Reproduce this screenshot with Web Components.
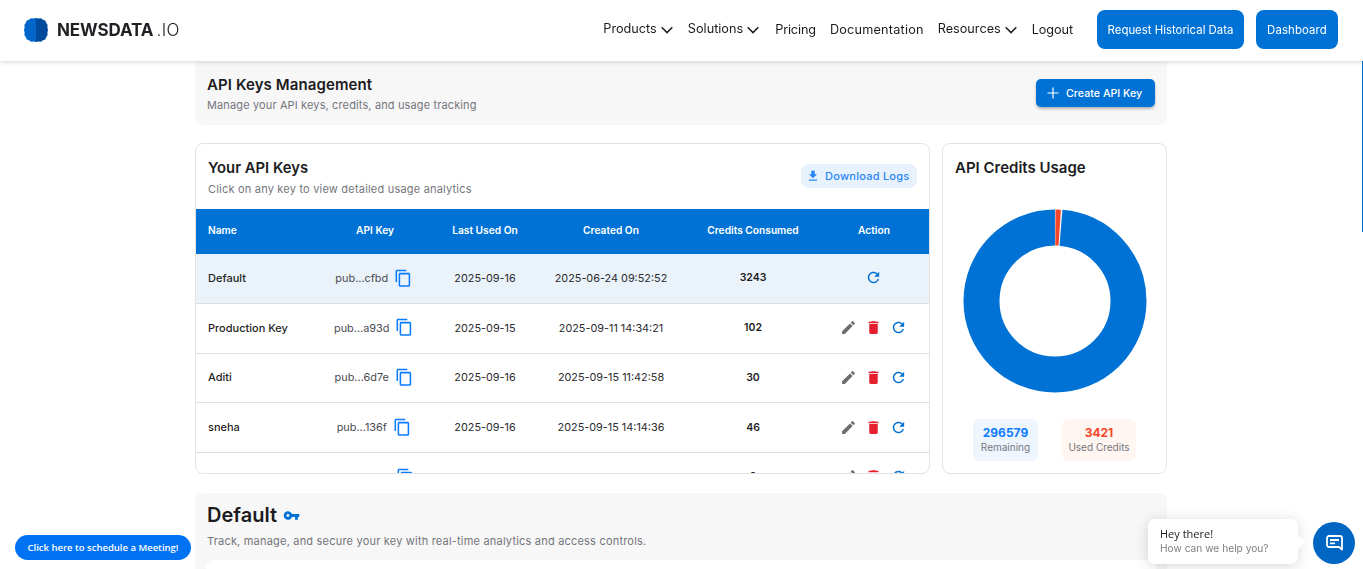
<!DOCTYPE html>
<html lang="en">
<head>
<meta charset="utf-8">
<title>API Keys</title>
<style>
  html, body { margin: 0; height: 569px; overflow: hidden; background: #fff; }
  body { font-family: Inter, "Liberation Sans", sans-serif; color: #1c1c1e; }
</style>
</head>
<body>
<site-header></site-header>
<main-page>
  <title-band heading="API Keys Management" sub="Manage your API keys, credits, and usage tracking"></title-band>
  <keys-card></keys-card>
  <credits-card></credits-card>
  <default-band></default-band>
</main-page>
<meeting-pill></meeting-pill>
<chat-widget></chat-widget>
<edge-bar></edge-bar>
<script>
const ICONS = {
  copy: 'M16 1H4c-1.1 0-2 .9-2 2v14h2V3h12V1zm3 4H8c-1.1 0-2 .9-2 2v14c0 1.1.9 2 2 2h11c1.1 0 2-.9 2-2V7c0-1.1-.9-2-2-2zm0 16H8V7h11v14z',
  edit: 'M3 17.25V21h3.75L17.81 9.94l-3.75-3.75L3 17.25zM20.71 7.04c.39-.39.39-1.02 0-1.41l-2.34-2.34c-.39-.39-1.02-.39-1.41 0l-1.83 1.83 3.75 3.75 1.83-1.83z',
  trash: 'M6 19c0 1.1.9 2 2 2h8c1.1 0 2-.9 2-2V7H6v12zM19 4h-3.5l-1-1h-5l-1 1H5v2h14V4z',
  refresh: 'M17.65 6.35C16.2 4.9 14.21 4 12 4c-4.42 0-7.99 3.58-7.99 8s3.57 8 7.99 8c3.73 0 6.84-2.55 7.73-6h-2.08c-.82 2.33-3.04 4-5.65 4-3.31 0-6-2.69-6-6s2.69-6 6-6c1.66 0 3.14.69 4.22 1.78L13 11h7V4l-2.35 2.35z',
  download: 'M19 9h-4V3H9v6H5l7 7 7-7zM5 18v2h14v-2H5z',
  key: 'M12.65 10C11.83 7.67 9.61 6 7 6c-3.31 0-6 2.69-6 6s2.69 6 6 6c2.61 0 4.83-1.67 5.65-4H17v4h4v-4h2v-4H12.65zM7 14c-1.1 0-2-.9-2-2s.9-2 2-2 2 .9 2 2-.9 2-2 2z'
};
const icon = (name, size, color) =>
  `<svg width="${size}" height="${size}" viewBox="0 0 24 24" fill="${color}" style="display:block;flex:none"><path d="${ICONS[name]}"/></svg>`;
const chevron = `<svg width="12" height="8" viewBox="0 0 12 8" fill="none" stroke="#1c1c1e" stroke-width="1.5" style="display:block;flex:none"><path d="M.7 1.300 6 6.600l5.300-5.300"/></svg>`;

class SiteHeader extends HTMLElement {
  constructor() { super(); this.attachShadow({ mode: 'open' }); }
  connectedCallback() {
    const link = (t, menu, cls = '') => `<a class="${menu ? 'menu' : ''} ${cls}">${t}${menu ? chevron : ''}</a>`;
    this.shadowRoot.innerHTML = `
      <style>
        :host { display: flex; align-items: center; height: 61px; box-sizing: border-box; padding: 0 25px 2px 24px;
          background: #fff; box-shadow: 0 1px 5px rgba(0,0,0,.16); position: relative; z-index: 3; }
        .logo { display: flex; align-items: center; gap: 9px; font-size: 17px; font-weight: 700; color: #1f2023; letter-spacing: -.1px; }
        .logo span { font-weight: 300; margin-left: 3px; letter-spacing: .4px; }
        nav { margin-left: auto; display: flex; align-items: center; gap: 15px; font-size: 12.700px; color: #1c1c1e; }
        a { display: flex; align-items: center; white-space: nowrap; }
        a.menu { margin-top: -2px; gap: 4px; }
        a.menu svg { margin-top: 3px; }
        a.sol { margin-right: 1px; }
        a.doc { letter-spacing: .2px; margin-left: -1px; margin-right: -1px; }
        a.price { letter-spacing: -.15px; }
        a.logout { letter-spacing: -.1px; }
        button { font: inherit; font-size: 11.400px; color: #fff; background: #0072d6; border: 0; border-radius: 8px; height: 39px; padding: 0; }
        .btns { display: flex; gap: 12px; margin-left: 9px; }
        .wide { width: 147px; }
        .dash { width: 82px; letter-spacing: .12px; }
      </style>
      <div class="logo">
        <svg width="24" height="24" viewBox="0 0 24 24">
          <path fill="#0066cc" d="M12 0 9.500.6 7 .3 5 1.800 2.800 2.600 1.800 4.800.4 7 .6 9.600 0 12l.6 2.400-.2 2.600 1.400 2.200 1 2.200 2.200.8L7 23.700l2.500-.3 2.500.6z"/>
          <path fill="#004a9c" d="M12 0l2.500.6L17 .3l2 1.500 2.200.8 1 2.200L23.600 7l-.2 2.600.6 2.400-.6 2.400.2 2.600-1.400 2.200-1 2.200-2.200.8-2 1.500-2.500-.3-2.500.6z"/>
        </svg>
        <div>NEWSDATA<span>.IO</span></div>
      </div>
      <nav>
        ${link('Products', 1)}${link('Solutions', 1, 'sol')}${link('Pricing', 0, 'price')}${link('Documentation', 0, 'doc')}${link('Resources', 1)}${link('Logout', 0, 'logout')}
        <div class="btns"><button class="wide">Request Historical Data</button><button class="dash">Dashboard</button></div>
      </nav>`;
  }
}

class MainPage extends HTMLElement {
  constructor() { super(); this.attachShadow({ mode: 'open' }); }
  connectedCallback() {
    this.shadowRoot.innerHTML = `
      <style>
        :host { display: grid; width: 972px; margin-left: 195px; grid-template-columns: 735px 225px;
          column-gap: 12px; grid-template-rows: 64px 331px auto; row-gap: 18px; }
        ::slotted(title-band), ::slotted(default-band) { grid-column: 1 / -1; }
        ::slotted(default-band) { margin-top: 1px; }
      </style>
      <slot></slot>`;
  }
}

class TitleBand extends HTMLElement {
  constructor() { super(); this.attachShadow({ mode: 'open' }); }
  connectedCallback() {
    this.shadowRoot.innerHTML = `
      <style>
        :host { display: flex; align-items: center; justify-content: space-between; box-sizing: border-box; padding: 13px 12px 12px 12px;
          background: #f7f7f7; border-radius: 0 0 8px 8px; }
        h1 { margin: 0; font-size: 15px; line-height: 20px; font-weight: 600; color: #1c1c1e; letter-spacing: .1px; }
        p { margin: 3px 0 0; font-size: 11px; line-height: 15px; color: #75757d; letter-spacing: .13px; }
        button { display: flex; align-items: center; gap: 7px; font: inherit; font-size: 10.700px; font-weight: 500; color: #fff; background: #0072d6;
          border: 0; border-radius: 5px; width: 119px; height: 28px; padding: 0 0 0 11px; box-shadow: 0 2px 3px rgba(0,0,0,.28); margin-top: -1px; }
        svg { display: block; flex: none; }
      </style>
      <div><h1>${this.getAttribute('heading')}</h1><p>${this.getAttribute('sub')}</p></div>
      <button><svg width="12" height="12" viewBox="0 0 12 12" stroke="#fff" stroke-width="1.200"><path d="M6 .5v11M.5 6h11"/></svg>Create API Key</button>`;
  }
}

const KEYS = [
  ['Default', 'pub...cfbd', '2025-09-16', '2025-06-24 09:52:52', '3243', true],
  ['Production Key', 'pub...a93d', '2025-09-15', '2025-09-11 14:34:21', '102'],
  ['Aditi', 'pub...6d7e', '2025-09-16', '2025-09-15 11:42:58', '30'],
  ['sneha', 'pub...136f', '2025-09-16', '2025-09-15 14:14:36', '46'],
  ['product', 'pub...0520', '', '2025-09-15 10:24:24', '0']
];

class KeysCard extends HTMLElement {
  constructor() { super(); this.attachShadow({ mode: 'open' }); }
  connectedCallback() {
    const rows = KEYS.map(([name, key, last, created, used, isDefault]) => `
      <div class="row ${isDefault ? 'on' : ''}">
        <b class="name">${name}</b>
        <div class="key">${key}${icon('copy', 18.5, '#0d7bff')}</div>
        <div class="date">${last}</div>
        <div class="date">${created}</div>
        <b>${used}</b>
        <div class="acts">
          ${isDefault ? '' : icon('edit', 17, '#6d6d6d') + icon('trash', 17, '#e5202e')}
          ${icon('refresh', 17, '#0072d6')}
        </div>
      </div>`).join('');
    this.shadowRoot.innerHTML = `
      <style>
        :host { display: flex; flex-direction: column; box-sizing: border-box; background: #fff; border: 1px solid #e3e3e3;
          border-radius: 8px; overflow: hidden; height: 331px; }
        .top { display: flex; justify-content: space-between; align-items: center; height: 65px; flex: none; padding: 1px 12px 0; box-sizing: border-box; }
        h2 { margin: 0; font-size: 14.800px; line-height: 20px; font-weight: 600; }
        p { margin: 4px 0 0; font-size: 11px; line-height: 15px; color: #75757d; letter-spacing: .2px; }
        .dl { display: flex; align-items: center; gap: 5px; height: 24px; width: 116px; box-sizing: border-box; padding-left: 5px; margin-top: -2px;
          background: #e8f2fd; border-radius: 8px; color: #2a85f5; font-size: 11px; font-weight: 500; letter-spacing: .25px; }
        .row, .head { display: grid; grid-template-columns: 118px 122px 98px 154px 130px 112px; align-items: center; text-align: center; font-size: 10.500px; color: #2b2b30; }
        .head { height: 45px; padding-bottom: 4px; box-sizing: border-box; background: #0072d6; color: #fff; font-weight: 600; font-size: 10.200px; flex: none; }
        .head div:first-child, .name { text-align: left; padding-left: 12px; }
        .row { height: 49.750px; flex: none; border-bottom: 1px solid #e0e0e0; box-sizing: border-box; padding-bottom: 1px; }
        .row.on { background: #eaf2fa; }
        .row b { font-weight: 600; color: #1f1f24; }
        .row .name { font-weight: 500; font-size: 11px; white-space: nowrap; }
        .date { font-size: 10.850px; }
        .key { display: flex; justify-content: center; align-items: center; gap: 6px; color: #4a4a50; font-size: 10.900px; padding-right: 2px; }
        .acts { display: flex; justify-content: center; align-items: center; gap: 8px; padding-right: 2px; }
      </style>
      <div class="top">
        <div><h2>Your API Keys</h2><p>Click on any key to view detailed usage analytics</p></div>
        <div class="dl">${icon('download', 14, '#2a85f5')}Download Logs</div>
      </div>
      <div class="head"><div>Name</div><div>API Key</div><div>Last Used On</div><div>Created On</div><div>Credits Consumed</div><div>Action</div></div>
      ${rows}`;
  }
}

class CreditsCard extends HTMLElement {
  constructor() { super(); this.attachShadow({ mode: 'open' }); }
  connectedCallback() {
    // ring: r is the middle of the stroke, red slice sits right of 12 o'clock
    const r = 73.5, c = 2 * Math.PI * r, used = 4.1 / 360 * c, gap = 1.6;
    this.shadowRoot.innerHTML = `
      <style>
        :host { display: flex; flex-direction: column; align-items: center; box-sizing: border-box; background: #fff; border: 1px solid #e3e3e3;
          border-radius: 8px; height: 331px; padding-top: 14px; }
        h2 { margin: 0; font-size: 15px; line-height: 20px; font-weight: 600; align-self: flex-start; padding-left: 12px; }
        svg { display: block; margin-top: 30px; }
        .stats { display: flex; gap: 24px; margin-top: 25px; }
        .stat { height: 42px; border-radius: 6px; text-align: center; box-sizing: border-box; padding-top: 6px; }
        .stat b { display: block; font-size: 12px; line-height: 15px; font-weight: 700; }
        .stat span { display: block; font-size: 10px; line-height: 14px; color: #75757d; }
        .a { width: 65px; background: #eef5fd; } .a b { color: #0d7bff; }
        .b { width: 74px; background: #fff6f1; } .b b { color: #f4462a; }
      </style>
      <h2>API Credits Usage</h2>
      <svg width="186" height="186" viewBox="0 0 186 186">
        <g fill="none" stroke-width="36" transform="rotate(-90 93 93)">
          <circle cx="93" cy="93" r="${r}" stroke="#0072d6"
            stroke-dasharray="${c - used - gap} ${used + gap}" stroke-dashoffset="${-(used + gap / 2)}"/>
          <circle cx="93" cy="93" r="${r}" stroke="#f4462a"
            stroke-dasharray="${used - gap / 2} ${c - used + gap / 2}" stroke-dashoffset="${-gap / 4}"/>
        </g>
      </svg>
      <div class="stats">
        <div class="stat a"><b>296579</b><span>Remaining</span></div>
        <div class="stat b"><b>3421</b><span>Used Credits</span></div>
      </div>`;
  }
}

class DefaultBand extends HTMLElement {
  constructor() { super(); this.attachShadow({ mode: 'open' }); }
  connectedCallback() {
    this.shadowRoot.innerHTML = `
      <style>
        :host { display: block; background: #f7f7f7; border-radius: 8px 8px 0 0; padding: 9px 11px 0 12px; height: 76px; box-sizing: border-box; overflow: hidden; }
        h1 { display: flex; align-items: center; gap: 6px; margin: 0; font-size: 20px; line-height: 27px; font-weight: 600; color: #1c1c1e; }
        p { margin: 5px 0 11px; font-size: 11px; line-height: 15px; color: #75757d; letter-spacing: .2px; }
        .panel { height: 9px; background: #fff; border-radius: 8px 8px 0 0; margin-left: -1px; }
      </style>
      <h1>Default${icon('key', 17, '#0072d6')}</h1>
      <p>Track, manage, and secure your key with real-time analytics and access controls.</p>
      <div class="panel"></div>`;
  }
}

class MeetingPill extends HTMLElement {
  constructor() { super(); this.attachShadow({ mode: 'open' }); }
  connectedCallback() {
    this.shadowRoot.innerHTML = `
      <style>
        :host { position: fixed; left: 15px; top: 535px; width: 176px; height: 25px; z-index: 4; display: flex; align-items: center; justify-content: center;
          background: #0073f5; color: #fff; border-radius: 13px; font: 600 9.500px "Open Sans", sans-serif; white-space: nowrap; }
      </style>
      Click here to schedule a Meeting!`;
  }
}

class ChatWidget extends HTMLElement {
  constructor() { super(); this.attachShadow({ mode: 'open' }); }
  connectedCallback() {
    this.shadowRoot.innerHTML = `
      <style>
        :host { position: fixed; left: 1148px; top: 519px; z-index: 4; display: flex; align-items: center; gap: 15px; }
        .bubble { position: relative; width: 150px; height: 45px; box-sizing: border-box; padding: 7px 12px; background: #fff; border-radius: 7px;
          box-shadow: 0 2px 14px rgba(0,0,0,.16); }
        .bubble::after { content: ""; position: absolute; right: -5px; top: 18px; width: 10px; height: 10px; background: #fff; transform: rotate(45deg); }
        .hi { font: 400 11px/15px "Open Sans", sans-serif; color: #222; }
        .sub { font-size: 10.200px; line-height: 15px; color: #808086; }
        .fab { width: 42px; height: 42px; border-radius: 50%; background: #0066c4; display: flex; align-items: center; justify-content: center; margin-top: 3px; }
      </style>
      <div class="bubble"><div class="hi">Hey there!</div><div class="sub">How can we help you?</div></div>
      <div class="fab">
        <svg width="17" height="16" viewBox="0 0 17 16" fill="none" stroke="#fff" stroke-width="1.800">
          <path d="M3 1h11a2 2 0 0 1 2 2v11.500l-3-2.500H3a2 2 0 0 1-2-2V3a2 2 0 0 1 2-2z" stroke-linejoin="round"/>
          <path d="M4 5h9M4 8.300h5"/>
        </svg>
      </div>`;
  }
}

class EdgeBar extends HTMLElement {
  constructor() { super(); this.attachShadow({ mode: 'open' }); }
  connectedCallback() {
    this.shadowRoot.innerHTML = `<style>:host { position: fixed; right: 0; top: 38px; width: 1px; height: 194px; background: #0072d6; z-index: 2; }</style>`;
  }
}

customElements.define('site-header', SiteHeader);
customElements.define('main-page', MainPage);
customElements.define('title-band', TitleBand);
customElements.define('keys-card', KeysCard);
customElements.define('credits-card', CreditsCard);
customElements.define('default-band', DefaultBand);
customElements.define('meeting-pill', MeetingPill);
customElements.define('chat-widget', ChatWidget);
customElements.define('edge-bar', EdgeBar);
</script>
</body>
</html>
